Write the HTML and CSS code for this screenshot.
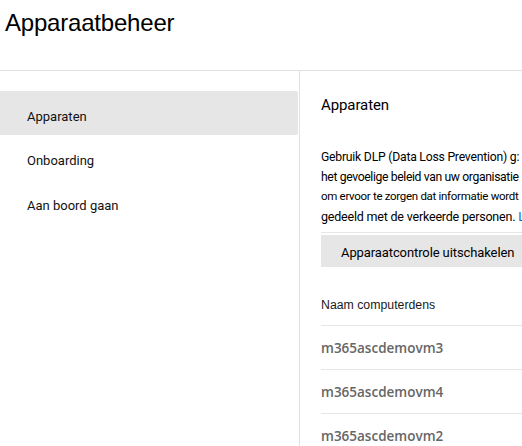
FILE: index.html
```html
<!DOCTYPE html>
<html lang="nl">
<head>
<meta charset="utf-8">
<title>Apparaatbeheer</title>
<link rel="stylesheet" href="styles.css">
</head>
<body>
<header class="header">
  <h1 class="title">Apparaatbeheer</h1>
</header>
<div class="main">
  <nav class="nav">
    <div class="nav-item active">Apparaten</div>
    <div class="nav-item">Onboarding</div>
    <div class="nav-item">Aan boord gaan</div>
  </nav>
  <section class="panel">
    <h2 class="panel-title">Apparaten</h2>
    <p class="desc">
      <span class="line l1">Gebruik DLP (Data Loss Prevention) g:</span>
      <span class="line l2">het gevoelige beleid van uw organisatie</span>
      <span class="line l3">om ervoor te zorgen dat informatie wordt</span>
      <span class="line l4">gedeeld met de verkeerde personen. <a class="link">Lees meer</a></span>
    </p>
    <div class="toolbar">
      <button class="btn">Apparaatcontrole uitschakelen</button>
      <span class="btn-sep"></span>
    </div>
    <div class="col-head">Naam computerdens</div>
    <div class="row">m365ascdemovm3</div>
    <div class="row">m365ascdemovm4</div>
    <div class="row">m365ascdemovm2</div>
  </section>
</div>
</body>
</html>
```
FILE: styles.css
```css
html, body {
  margin: 0;
  padding: 0;
  background: #fff;
  overflow: hidden;
  height: 446px;
}
body {
  font-family: Roboto, "Liberation Sans", sans-serif;
  color: #000;
}
.header {
  height: 70px;
  border-bottom: 1px solid #e1e1e1;
}
.title {
  margin: 0;
  padding: 9px 0 0 5px;
  font-family: "Liberation Sans", Arial, sans-serif;
  font-weight: 400;
  font-size: 24px;
  line-height: 28px;
  letter-spacing: -0.2px;
}
.main {
  display: flex;
  height: 375px;
}
.nav {
  width: 300px;
  flex: none;
  border-right: 1px solid #e1e1e1;
  padding-top: 20px;
  box-sizing: border-box;
}
.nav-item {
  height: 45px;
  display: flex;
  align-items: center;
  padding: 6px 0 0 27px;
  box-sizing: border-box;
  font-size: 13px;
  color: #111;
}
.nav-item.active {
  background: #e6e6e6;
  height: 44px;
  margin-right: 1px;
  border-radius: 0 2px 2px 0;
}
.panel {
  flex: 1;
  min-width: 0;
  padding-left: 21px;
  box-sizing: border-box;
}
.panel-title {
  margin: 0;
  padding-top: 25px;
  height: 40px;
  font-size: 15px;
  font-weight: 400;
  line-height: 18px;
  letter-spacing: -0.1px;
}
.desc {
  margin: 0;
  padding-top: 12px;
  font-size: 12.2px;
  line-height: 19.5px;
  height: 84px;
  overflow: hidden;
  white-space: nowrap;
}
.line {
  display: block;
}
.l1 {
  letter-spacing: -0.22px;
}
.l2 {
  letter-spacing: -0.37px;
}
.l3 {
  font-size: 11.5px;
  letter-spacing: -0.3px;
}
.l4 {
  font-size: 12.5px;
  letter-spacing: -0.2px;
}
.link {
  color: #0f6cbd;
}
.toolbar {
  display: flex;
  align-items: center;
  height: 35px;
  border-top: 1px solid #e6e6e6;
  padding-top: 2px;
  background: #e6e6e6;
  background-clip: content-box;
  box-sizing: border-box;
}
.btn {
  flex: none;
  white-space: nowrap;
  border: none;
  background: transparent;
  padding: 3px 0 0 20px;
  font-family: Roboto, "Liberation Sans", sans-serif;
  font-size: 13px;
  letter-spacing: -0.1px;
  color: #000;
  height: 32px;
}
.btn-sep {
  flex: none;
  width: 1px;
  height: 8px;
  margin-top: 4px;
  background: #cfcfcf;
  margin-left: 9px;
}
.col-head {
  height: 59px;
  display: flex;
  align-items: center;
  padding-top: 18px;
  font-family: "Liberation Sans", Arial, sans-serif;
  font-size: 12.3px;
  color: #1b1b1b;
  box-sizing: border-box;
  border-bottom: 1px solid #e6e6e6;
}
.row {
  height: 44px;
  display: flex;
  align-items: center;
  border-bottom: 1px solid #e6e6e6;
  font-family: "Open Sans", sans-serif;
  font-size: 13.5px;
  font-weight: 600;
  color: #666;
  box-sizing: border-box;
}
```
